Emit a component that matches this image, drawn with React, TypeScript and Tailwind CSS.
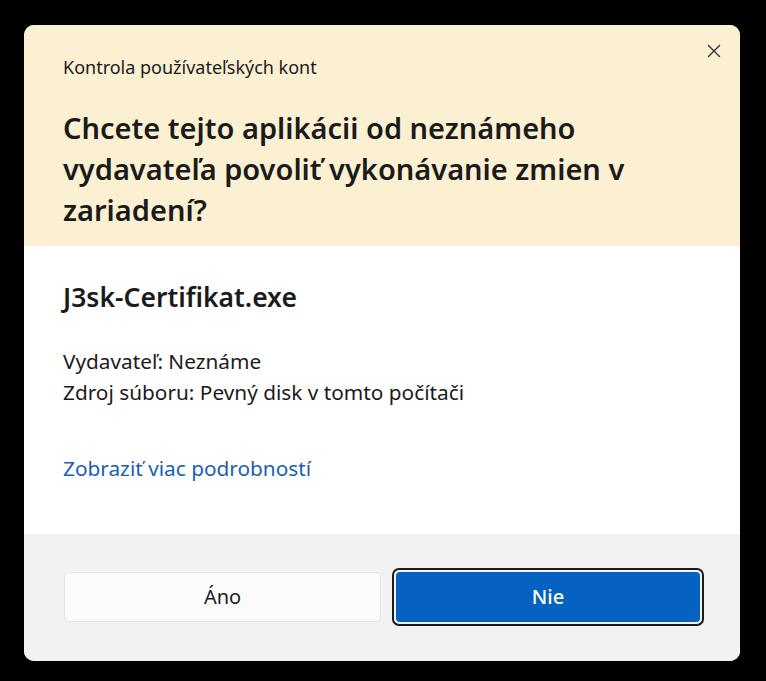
import React from 'react';

const font = { fontFamily: '"Noto Sans", "Open Sans", sans-serif' };

export default function App() {
  return (
    <div className="w-[766px] h-[681px] bg-black pt-[25px] pl-[24px]" style={font}>
      <div className="w-[716px] h-[636px] rounded-[10px] overflow-hidden flex flex-col bg-white">
        {/* header */}
        <div className="relative h-[221px] bg-[#fcf0d3] pl-[39px] pt-[31px]">
          <button className="absolute right-[18px] top-[18px] text-[#333]" title="Zavrieť">
            <svg width="16" height="16" viewBox="0 0 16 16" fill="none" stroke="currentColor" strokeWidth="1.4" strokeLinecap="round">
              <path d="M2.5 2.5l11 11M13.5 2.5l-11 11" />
            </svg>
          </button>
          <div className="text-[18px] leading-[22px] text-[#1b1b1b]">Kontrola používateľských kont</div>
          <h1 className="mt-[29px] w-[620px] text-[29px] leading-[41px] font-semibold text-[#1b1b1b]">
            Chcete tejto aplikácii od neznámeho vydavateľa povoliť vykonávanie zmien v zariadení?
          </h1>
        </div>

        {/* body */}
        <div className="h-[288px] bg-white pl-[39px] pt-[36px] text-[#1b1b1b]">
          <div className="text-[26.5px] leading-[30px] font-semibold">J3sk-Certifikat.exe</div>
          <div className="mt-[34px] text-[20.8px] leading-[31px]">
            <div>Vydavateľ: Neznáme</div>
            <div>Zdroj súboru: Pevný disk v tomto počítači</div>
          </div>
          <a className="block mt-[48px] text-[20.8px] leading-[24px] text-[#1a5fb4]" href="#">
            Zobraziť viac podrobností
          </a>
        </div>

        {/* footer */}
        <div className="flex-1 bg-[#f2f2f2] pl-[40px] pr-[36px] pt-[34px] flex gap-[11px]">
          <button className="mt-[4px] w-[317px] h-[50px] rounded-[4px] bg-[#fbfbfb] border border-[#e5e5e5] text-[20px] text-[#1b1b1b]">
            Áno
          </button>
          <div className="w-[312px] h-[58px] rounded-[7px] border-[2px] border-[#1b1b1b] p-[2px]">
            <button className="w-full h-full rounded-[4px] bg-[#0562c2] text-white text-[20px] font-medium">
              Nie
            </button>
          </div>
        </div>
      </div>
    </div>
  );
}
